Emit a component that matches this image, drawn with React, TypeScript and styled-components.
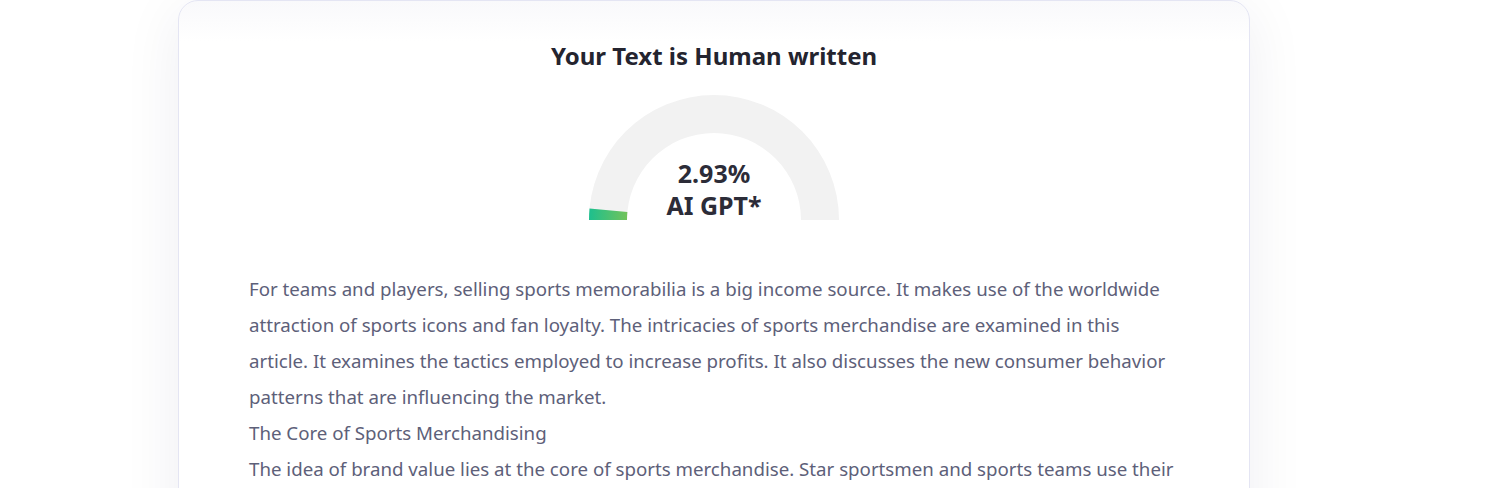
import React from 'react';
import styled, { createGlobalStyle } from 'styled-components';

const GlobalStyle = createGlobalStyle`
  html, body {
    margin: 0;
    padding: 0;
    background: #fff;
    font-family: "Noto Sans", "Open Sans", "Liberation Sans", sans-serif;
  }
`;

const score = 2.93;

const paragraphs = [
  'For teams and players, selling sports memorabilia is a big income source. It makes use of the worldwide attraction of sports icons and fan loyalty. The intricacies of sports merchandise are examined in this article. It examines the tactics employed to increase profits. It also discusses the new consumer behavior patterns that are influencing the market.',
  'The Core of Sports Merchandising',
  'The idea of brand value lies at the core of sports merchandise. Star sportsmen and sports teams use their brand power to sell everything from jerseys and caps to signed balls and collectibles.',
];

export default function App() {
  return (
    <>
      <GlobalStyle />
      <Page>
        <Card>
          <Title>Your Text is Human written</Title>
          <Gauge value={score} />
          <Body>
            {paragraphs.map((p, i) => (
              <p key={i}>{p}</p>
            ))}
          </Body>
        </Card>
      </Page>
    </>
  );
}

function Gauge({ value }: { value: number }) {
  const cx = 125;
  const cy = 125;
  const outer = 125;
  const inner = 87;
  const angle = Math.PI - (value / 100) * Math.PI;
  const ox = cx + outer * Math.cos(angle);
  const oy = cy - outer * Math.sin(angle);
  const ix = cx + inner * Math.cos(angle);
  const iy = cy - inner * Math.sin(angle);

  return (
    <GaugeWrap>
      <svg width="250" height="125" viewBox="0 0 250 125">
        <defs>
          <linearGradient id="gaugeFill" x1="0" y1="0" x2="1" y2="0">
            <stop offset="0%" stopColor="#1dbf8e" />
            <stop offset="100%" stopColor="#72c35a" />
          </linearGradient>
        </defs>
        <path
          d={`M0 125 A125 125 0 0 1 250 125 L${cx + inner} 125 A${inner} ${inner} 0 0 0 ${cx - inner} 125 Z`}
          fill="#f2f2f2"
        />
        <path
          d={`M0 125 A${outer} ${outer} 0 0 1 ${ox} ${oy} L${ix} ${iy} A${inner} ${inner} 0 0 0 ${cx - inner} 125 Z`}
          fill="url(#gaugeFill)"
        />
      </svg>
      <GaugeLabel>
        {value}%
        <br />
        AI GPT*
      </GaugeLabel>
    </GaugeWrap>
  );
}

const Page = styled.div`
  display: flex;
  padding: 0 260px 0 178px;
  height: 488px;
  overflow: hidden;
`;

const Card = styled.div`
  flex: 1;
  display: flex;
  flex-direction: column;
  align-items: center;
  padding: 39px 70px 0 70px;
  border: 1px solid #e4e5f3;
  border-radius: 20px;
  background: linear-gradient(180deg, #f9f9fb 0px, #fff 40px);
  box-shadow: 0 10px 60px rgba(30, 30, 70, 0.07);
  min-height: 700px;
`;

const Title = styled.h2`
  margin: 0;
  font-size: 24px;
  line-height: 32px;
  font-weight: 700;
  color: #24242f;
`;

const GaugeWrap = styled.div`
  position: relative;
  margin-top: 23px;
  width: 250px;
  height: 125px;

  svg {
    display: block;
  }
`;

const GaugeLabel = styled.div`
  position: absolute;
  left: 0;
  right: 0;
  top: 62px;
  text-align: center;
  font-size: 25px;
  line-height: 32px;
  font-weight: 700;
  color: #2c2c38;
`;

const Body = styled.div`
  align-self: stretch;
  margin-top: 51px;
  font-size: 18.7px;
  line-height: 36px;
  color: #5d6079;

  p {
    margin: 0;
  }
`;
